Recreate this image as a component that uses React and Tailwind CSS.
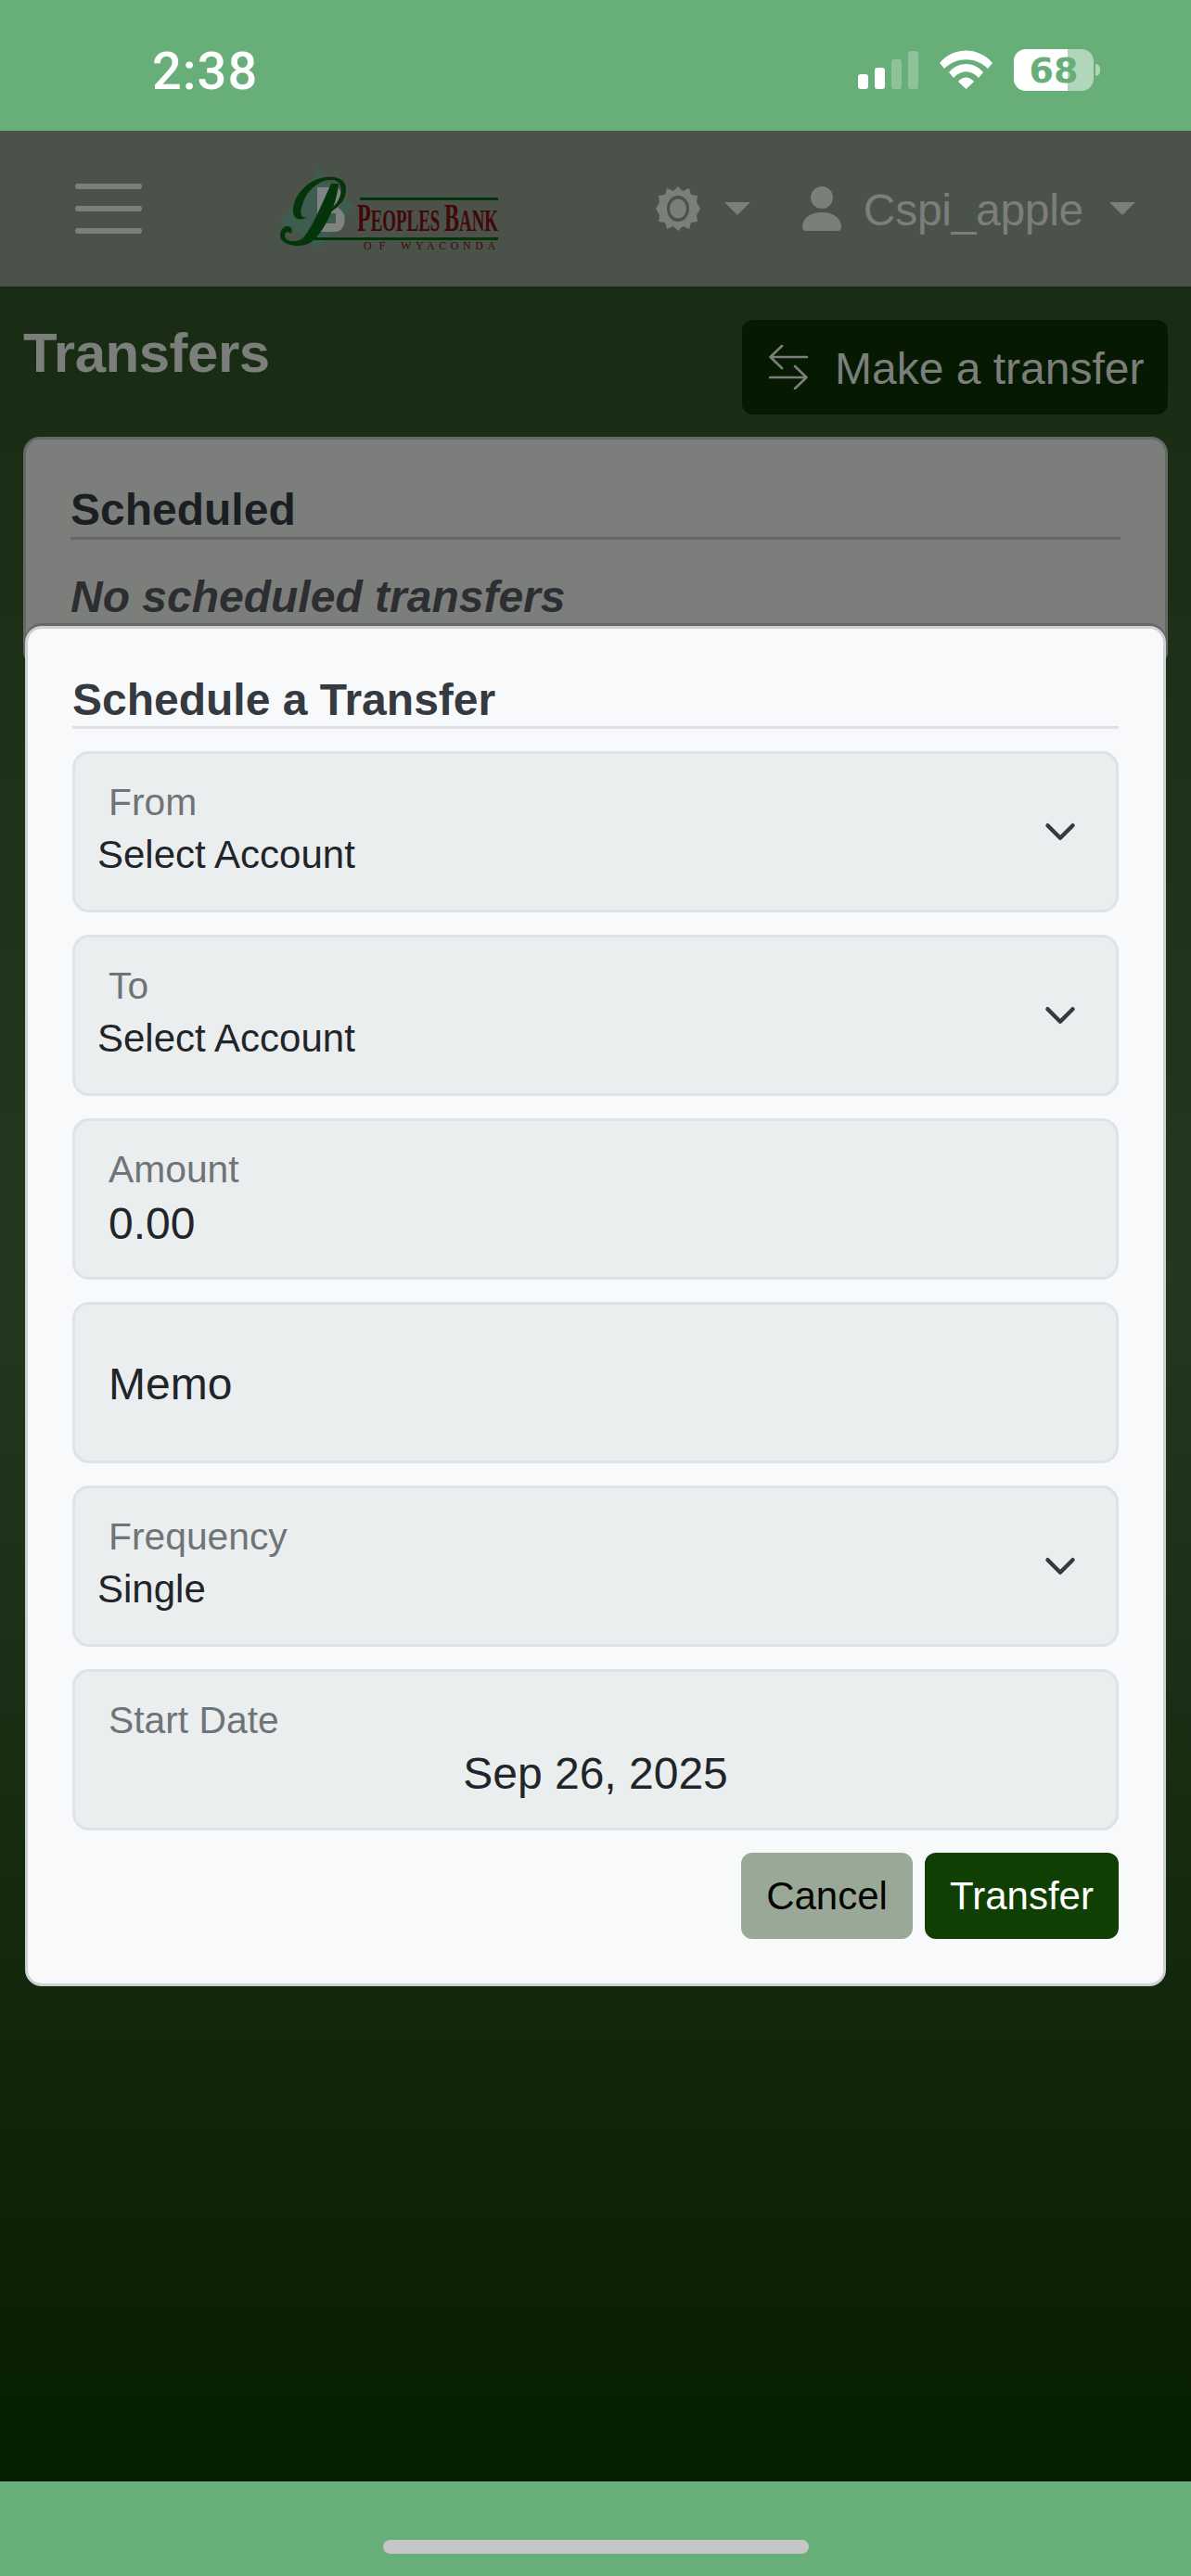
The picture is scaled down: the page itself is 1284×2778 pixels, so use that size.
const sans = "font-['Liberation_Sans',Arial,sans-serif]";

function Caret() {
  return <div className="w-0 h-0 border-x-[14px] border-x-transparent border-t-[14px] border-t-[#7c7e7b]" />;
}

function StatusIcons() {
  return (
    <svg width="145" height="45" viewBox="0 0 145 45" className="block">
      <rect x="0" y="27" width="11" height="16" rx="3" fill="#fff" />
      <rect x="18" y="20" width="11" height="23" rx="3" fill="#fff" />
      <rect x="36" y="11" width="11" height="32" rx="3" fill="#fff" opacity=".25" />
      <rect x="54" y="2" width="11" height="41" rx="3" fill="#fff" opacity=".25" />
      <path d="M88 15 C103 -3 130 -3 145 15 L140 21 C127 8 106 8 93 21 Z M98 25 C108 13 125 13 135 25 L130 31 C122 22 111 22 103 31 Z M108 35 C113 29 120 29 125 35 L116.5 43 Z" fill="#fff" />
    </svg>
  );
}

function Battery() {
  return (
    <div className="relative w-[93px] h-[45px] ml-[23px]">
      <div className="absolute inset-y-0 left-0 w-[86px] rounded-[13px] bg-[#b1d6ba]" />
      <div className="absolute inset-y-0 left-0 w-[58px] rounded-l-[13px] bg-white" />
      <div className="absolute right-0 top-[16px] w-[5px] h-[13px] rounded-r-full bg-[#b1d6ba]" />
      <div className="absolute inset-y-0 left-0 w-[86px] flex items-center justify-center font-['DejaVu_Sans',sans-serif] text-[38px] font-bold leading-none text-[#68ae78]">68</div>
    </div>
  );
}

function Logo() {
  return (
    <svg width="240" height="90" viewBox="0 0 240 90" className="block overflow-visible">
      <path d="M2 58 L42 3 L81 43 L42 88 Z" fill="#3f5c50" />
      <path d="M41 22 H60 C70 22 70 42 62 44 C74 46 74 70 60 70 H41 Z" fill="#7f8280" />
      <path d="M51 33 H58 V41 H51 Z M51 50 H61 V61 H51 Z" fill="#3f5c50" />
      <path d="M72 24 C72 12 60 10 50 11 C32 13 15 30 15 47 C15 58 24 58 30 54 C22 56 22 48 26 38 C30 26 42 14 56 14 C66 14 68 22 66 30 C64 38 58 44 52 48 L53 50 C64 44 72 36 72 24 Z" fill="#04340a" />
      <path d="M56 18 L64 18 C62 40 50 68 36 80 C26 88 8 86 2 78 C-1 72 3 64 9 64 C14 64 15 70 12 72 C10 69 6 70 6 74 C6 80 16 82 24 78 C34 70 46 40 56 18 Z" fill="#04340a" />
      <rect x="87" y="33" width="149" height="3" fill="#04340a" />
      <rect x="34" y="76" width="202" height="3" fill="#04340a" />
      <text transform="translate(84 69) scale(.573 1)" fontFamily="'Liberation Serif', serif" fontWeight="700" fontSize="33" fill="#420709">
        <tspan fontSize="42">P</tspan>EOPLES <tspan fontSize="42">B</tspan>ANK
      </text>
      <text x="91" y="89" letterSpacing="8" fontFamily="'Liberation Serif', serif" fontSize="12" fill="#420709">OF</text>
      <text x="131" y="89" letterSpacing="4.6" fontFamily="'Liberation Serif', serif" fontSize="12" fill="#420709">WYACONDA</text>
    </svg>
  );
}

function Gear() {
  return (
    <svg width="48" height="48" viewBox="0 0 48 48" className="block">
      <path fillRule="evenodd" d="M24 0 L29 5 L36 2 L38 9 L45 10 L44 17 L48 24 L44 31 L45 38 L38 39 L36 46 L29 43 L24 48 L19 43 L12 46 L10 39 L3 38 L4 31 L0 24 L4 17 L3 10 L10 9 L12 2 L19 5 Z M24 10 A12 14 0 1 0 24 38 A12 14 0 1 0 24 10 Z" fill="#7c7e7b" />
      <ellipse cx="24" cy="24" rx="9" ry="10.5" fill="#7c7e7b" />
    </svg>
  );
}

function Person() {
  return (
    <svg width="42" height="48" viewBox="0 0 42 48" className="block">
      <ellipse cx="21" cy="12" rx="12" ry="12" fill="#7c7e7b" />
      <path d="M0 44 C0 34 9 28 21 28 C33 28 42 34 42 44 Q42 48 38 48 H4 Q0 48 0 44 Z" fill="#7c7e7b" />
    </svg>
  );
}

function SwapIcon() {
  return (
    <svg width="42" height="48" viewBox="0 0 42 48" fill="none" stroke="#7c7e7b" strokeWidth="2.6" strokeLinecap="round" strokeLinejoin="round" className="block">
      <path d="M41 13 H1.5 M14 1 L1.5 13 L14 25" />
      <path d="M1 35 H40.5 M28 23 L40.5 35 L28 47" />
    </svg>
  );
}

function Chevron() {
  return (
    <svg width="36" height="36" viewBox="0 0 16 16" fill="none" stroke="#343a40" strokeWidth="2" strokeLinecap="round" strokeLinejoin="round" className="absolute right-[42px] top-[66px]">
      <path d="m2 5 6 6 6-6" />
    </svg>
  );
}

function Field({ label, value, select, center, large }) {
  return (
    <div className="relative h-[174px] rounded-[18px] border-[3px] border-[#dfe2e6] bg-[#ebeeef]">
      {label && <div className="absolute left-[36px] top-[28px] text-[40.8px] leading-[48px] text-[#6f7478]">{label}</div>}
      {large ? (
        <div className="absolute left-[36px] top-[58px] text-[48px] leading-[56px] text-[#212529]">{large}</div>
      ) : (
        <div className={center
          ? "absolute inset-x-0 top-[82px] text-center text-[48px] leading-[56px] text-[#212529]"
          : select
            ? "absolute left-[24px] top-[85px] text-[42px] leading-[48px] text-[#212529]"
            : "absolute left-[36px] top-[83px] text-[48px] leading-[56px] text-[#212529]"}>
          {value}
        </div>
      )}
      {select && <Chevron />}
    </div>
  );
}

export default function App() {
  return (
    <div className={`relative w-[1284px] h-[2778px] overflow-hidden flex flex-col bg-[#68ae78] ${sans}`}>
      <div className="h-[141px] shrink-0 flex items-start justify-between pl-[164px] pr-[98px] pt-[53px] bg-[#68ae78]">
        <div className="font-['Roboto',sans-serif] text-[56px] font-medium leading-[48px] tracking-[1px] text-white">2:38</div>
        <div className="flex items-start">
          <StatusIcons />
          <Battery />
        </div>
      </div>

      <div className="h-[168px] shrink-0 flex items-center bg-[#4b5249] pl-[81px] pr-[60px]">
        <div className="w-[72px] flex flex-col gap-[18px]">
          <div className="h-[6px] rounded-full bg-[#7f7f7f]" />
          <div className="h-[6px] rounded-full bg-[#7f7f7f]" />
          <div className="h-[6px] rounded-full bg-[#7f7f7f]" />
        </div>
        <div className="ml-[148px]"><Logo /></div>
        <div className="ml-auto flex items-center">
          <Gear />
          <div className="ml-[26px]"><Caret /></div>
          <div className="ml-[56px]"><Person /></div>
          <div className="ml-[24px] text-[48px] leading-none tracking-[-0.3px] text-[#7c7e7b] translate-y-[2px]">Cspi_apple</div>
          <div className="ml-[28px]"><Caret /></div>
        </div>
      </div>

      <div className="flex-1 bg-[linear-gradient(to_bottom,#172c12_0%,#243820_45%,#12280c_78%,#051d00_100%)] px-[25px]">
        <div className="flex items-start justify-between pt-[36px] h-[162px]">
          <h1 className="text-[60px] font-bold leading-[72px] tracking-[-0.5px] text-[#7c7e7b]">Transfers</h1>
          <div className="h-[102px] w-[459px] rounded-[12px] bg-[#051a00] flex items-center pl-[29px] gap-[29px] text-[48px] text-[#7c7e7b]">
            <SwapIcon />
            <span className="translate-y-[2px]">Make a transfer</span>
          </div>
        </div>
        <div className="h-[249px] rounded-[18px] border-[3px] border-[#666866] bg-[#7c7e7c] px-[48px] pt-[48px]">
          <div className="text-[48px] font-bold leading-[56px] text-[#1b1e22] border-b-[3px] border-[#666866] pb-[1px]">Scheduled</div>
          <div className="mt-[34px] text-[48px] font-bold italic leading-[56px] text-[#2c2e31]">No scheduled transfers</div>
        </div>
      </div>

      <div className="h-[102px] shrink-0 flex items-end justify-center pb-[24px] bg-[#68ae78]">
        <div className="w-[459px] h-[15px] rounded-full bg-[#c6c6c6]" />
      </div>

      <div className="absolute left-[27px] top-[675px] w-[1230px] h-[1467px] rounded-[18px] border-[3px] border-[#cfd0d1] bg-[#f8f9fb] shadow-[0_-3px_0_#666866] px-[48px] pt-[49px]">
        <div className="text-[48px] font-bold leading-[56px] text-[#343a40] border-b-[3px] border-[#dfe0e5]">Schedule a Transfer</div>
        <div className="mt-[24px] flex flex-col gap-[24px]">
          <Field label="From" value="Select Account" select />
          <Field label="To" value="Select Account" select />
          <Field label="Amount" value="0.00" />
          <Field large="Memo" />
          <Field label="Frequency" value="Single" select />
          <Field label="Start Date" value="Sep 26, 2025" center />
        </div>
        <div className="mt-[24px] flex justify-end gap-[13px]">
          <div className="w-[185px] h-[93px] rounded-[12px] bg-[#9aa997] flex items-center justify-center text-[42px] text-[#050505]">Cancel</div>
          <div className="w-[209px] h-[93px] rounded-[12px] bg-[#103f03] flex items-center justify-center text-[42px] text-white">Transfer</div>
        </div>
      </div>
    </div>
  );
}
